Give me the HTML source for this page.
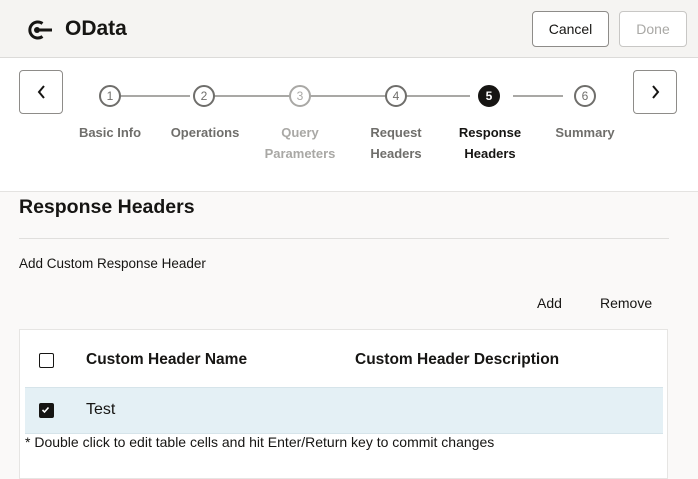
<!DOCTYPE html>
<html><head><style>
body{margin:0;width:698px;height:462px;overflow:hidden;background:#faf9f8;font-family:"Liberation Sans",sans-serif;position:relative;color:#161513}
.a{position:absolute}
.hdr{left:0;top:0;width:698px;height:57px;background:#f5f4f2;border-bottom:1px solid #dcdbd9}
.btn{border:1px solid #8e8c89;border-radius:4px;background:#fff;font-size:14px;text-align:center;box-sizing:border-box;line-height:34px}
.step{left:0;top:58px;width:698px;height:133px;background:#fff;border-bottom:1px solid #e4e3e1}
.c{width:22px;height:22px;border:2px solid #6f6e6b;border-radius:50%;box-sizing:border-box;font-size:12px;text-align:center;line-height:18px;color:#6f6e6b;background:#fff}
.ln{height:2px;background:#a9a8a5;top:95px}
.lb{font-size:13px;font-weight:bold;color:#6f6e6b;text-align:center;width:100px;line-height:21px;top:122px}
.nav{width:44px;height:44px;border:1px solid #8e8c89;border-radius:4px;box-sizing:border-box;top:70px;background:#fff}
.cb{width:15px;height:15px;border:1.5px solid #161513;border-radius:2px;box-sizing:border-box}
</style></head><body>
<div class="a hdr"></div>
<svg class="a" style="left:25px;top:18px" width="28" height="24" viewBox="0 0 28 24"><path d="M17.5 5.5A8 8 0 1 0 17.5 18.5" fill="none" stroke="#161513" stroke-width="3"/><circle cx="12" cy="12" r="3" fill="#161513"/><path d="M12 12H27" stroke="#161513" stroke-width="3"/></svg>
<div class="a" style="left:65px;top:17px;font-size:21px;font-weight:bold">OData</div>
<div class="a btn" style="left:532px;top:11px;width:77px;height:36px">Cancel</div>
<div class="a btn" style="left:619px;top:11px;width:68px;height:36px;color:#a9a8a5;border-color:#c8c7c5">Done</div>
<div class="a step"></div>
<div class="a nav" style="left:19px"><svg width="42" height="42"><path d="M24 15l-5 6 5 6" fill="none" stroke="#161513" stroke-width="2"/></svg></div>
<div class="a nav" style="left:633px"><svg width="42" height="42"><path d="M19 15l5 6-5 6" fill="none" stroke="#161513" stroke-width="2"/></svg></div>
<div class="a ln" style="left:120px;width:70px"></div>
<div class="a ln" style="left:214px;width:76px"></div>
<div class="a ln" style="left:310px;width:76px"></div>
<div class="a ln" style="left:406px;width:64px"></div>
<div class="a ln" style="left:513px;width:50px"></div>
<div class="a c" style="left:99px;top:85px">1</div>
<div class="a c" style="left:193px;top:85px">2</div>
<div class="a c" style="left:289px;top:85px;border-color:#a9a8a5;color:#a9a8a5">3</div>
<div class="a c" style="left:385px;top:85px">4</div>
<div class="a c" style="left:478px;top:85px;background:#161513;border-color:#161513;color:#fff;font-weight:bold">5</div>
<div class="a c" style="left:574px;top:85px">6</div>
<div class="a lb" style="left:60px">Basic Info</div>
<div class="a lb" style="left:155px">Operations</div>
<div class="a lb" style="left:250px;color:#a9a8a5">Query<br>Parameters</div>
<div class="a lb" style="left:346px">Request<br>Headers</div>
<div class="a lb" style="left:440px;color:#161513">Response<br>Headers</div>
<div class="a lb" style="left:535px">Summary</div>
<div class="a" style="left:19px;top:196px;font-size:19.5px;font-weight:bold">Response Headers</div>
<div class="a" style="left:19px;top:238px;width:650px;height:1px;background:#e0dfdd"></div>
<div class="a" style="left:19px;top:256px;font-size:13.5px">Add Custom Response Header</div>
<div class="a" style="left:537px;top:295px;font-size:14px">Add</div>
<div class="a" style="left:600px;top:295px;font-size:14px">Remove</div>
<div class="a" style="left:19px;top:329px;width:649px;height:150px;background:#fff;border:1px solid #e6e5e3;box-sizing:border-box"></div>
<div class="a cb" style="left:39px;top:353px"></div>
<div class="a" style="left:86px;top:351px;font-size:15.5px;font-weight:bold">Custom Header Name</div>
<div class="a" style="left:355px;top:351px;font-size:15.5px;font-weight:bold">Custom Header Description</div>
<div class="a" style="left:25px;top:387px;width:638px;height:47px;background:#e4f0f5;border-top:1px solid #d6e4ea;border-bottom:1px solid #d6e4ea;box-sizing:border-box"></div>
<div class="a cb" style="left:39px;top:403px;background:#161513"><svg width="12" height="12" style="position:absolute;left:0;top:0"><path d="M2.5 6l2 2 4-4.5" fill="none" stroke="#fff" stroke-width="1.6"/></svg></div>
<div class="a" style="left:86px;top:401px;font-size:16px">Test</div>
<div class="a" style="left:25px;top:434px;font-size:14px">* Double click to edit table cells and hit Enter/Return key to commit changes</div>
</body></html>
